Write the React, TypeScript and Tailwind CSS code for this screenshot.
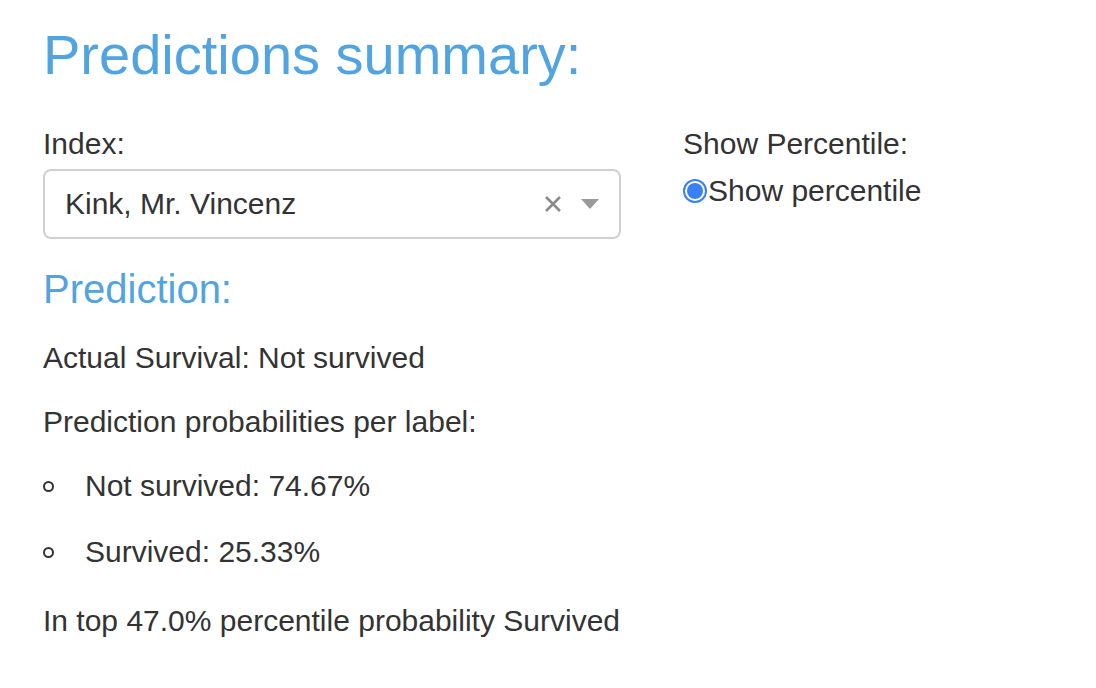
export default function App() {
  return (
    <div className="min-h-screen bg-white text-[#333333]" style={{ fontFamily: '"Liberation Sans", Arial, Helvetica, sans-serif' }}>
      <div className="px-[43px] pt-[21px]">
        <h1 className="text-[56px] leading-[67px] text-[#52a4e0] font-normal">Predictions summary:</h1>
        <div className="flex mt-[38px]">
          <div className="w-[578px]">
            <label className="block text-[30px] leading-[36px]">Index:</label>
            <div className="mt-[7px] h-[70px] flex items-center border-2 border-[#d0d0d0] rounded-lg pl-[20px] pr-[20px]">
              <span className="flex-1 text-[30px] leading-[36px]">Kink, Mr. Vincenz</span>
              <svg width="20" height="20" viewBox="0 0 20 20" className="mr-[18px]">
                <path d="M3 3 L17 17 M17 3 L3 17" stroke="#8a8a8a" strokeWidth="2.6" strokeLinecap="butt" />
              </svg>
              <svg width="18" height="10" viewBox="0 0 18 10">
                <path d="M0 0 L18 0 L9 10 Z" fill="#9a9a9a" />
              </svg>
            </div>
            <h2 className="mt-[26px] text-[40px] leading-[48px] text-[#52a4e0] font-normal">Prediction:</h2>
            <p className="mt-[27px] text-[30px] leading-[36px]">Actual Survival: Not survived</p>
            <p className="mt-[28px] text-[30px] leading-[36px]">Prediction probabilities per label:</p>
            <ul className="mt-[28px] text-[30px] leading-[36px]">
              <li className="flex items-center">
                <span className="w-[11px] h-[11px] rounded-full border-2 border-[#333333] mr-[31px]"></span>
                Not survived: 74.67%
              </li>
              <li className="flex items-center mt-[30px]">
                <span className="w-[11px] h-[11px] rounded-full border-2 border-[#333333] mr-[31px]"></span>
                Survived: 25.33%
              </li>
            </ul>
            <p className="mt-[33px] text-[30px] leading-[36px]">In top 47.0% percentile probability Survived</p>
          </div>
          <div className="ml-[62px]">
            <div className="text-[30px] leading-[36px]">Show Percentile:</div>
            <label className="flex items-center text-[30px] leading-[36px] mt-[11px]">
              <span className="w-[24px] h-[24px] rounded-full border-[2px] border-[#3a7ff6] flex items-center justify-center">
                <span className="w-[16px] h-[16px] rounded-full bg-[#3a7ff6]"></span>
              </span>
              <span className="ml-[1px]">Show percentile</span>
            </label>
          </div>
        </div>
      </div>
    </div>
  );
}
